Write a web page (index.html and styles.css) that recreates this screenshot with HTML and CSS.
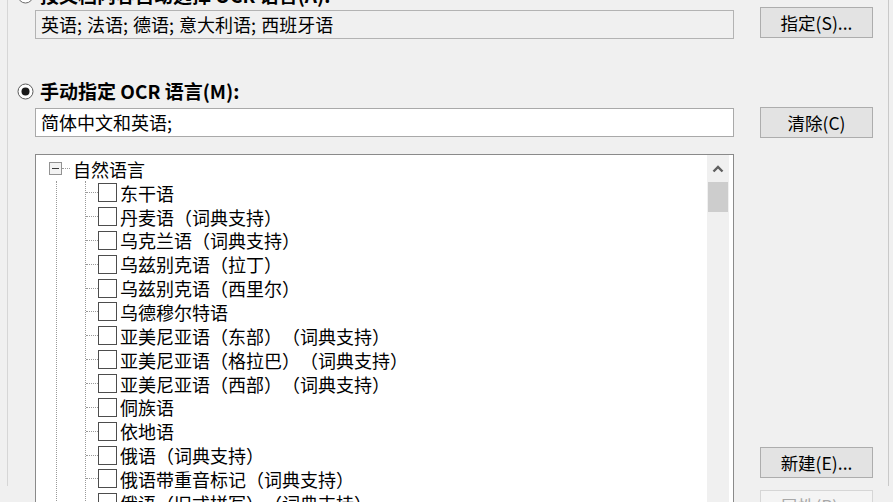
FILE: index.html
```html
<!DOCTYPE html>
<html lang="zh-CN">
<head>
  <meta charset="utf-8" />
  <title>OCR 语言</title>
  <link rel="stylesheet" href="styles.css">
</head>
<body>
  <div class="dialog">
    <div class="group">
      <div class="opt opt-auto">
        <svg class="radio" width="17" height="17" viewBox="0 0 17 17"><circle cx="8.5" cy="8.5" r="7.5" fill="#fff" stroke="#6a6a6a"/></svg>
        <b>按文档内容自动选择 OCR 语言(A):</b>
      </div>
      <div class="row row-auto">
        <div class="field is-disabled">英语; 法语; 德语; 意大利语; 西班牙语</div>
        <button class="btn" type="button">指定(S)...</button>
      </div>

      <div class="opt opt-manual">
        <svg class="radio" width="17" height="17" viewBox="0 0 17 17"><circle cx="8.5" cy="8.5" r="7.5" fill="#fff" stroke="#5a5a5a"/><circle cx="8.5" cy="8.5" r="4" fill="#1a1a1a"/></svg>
        <b>手动指定 OCR 语言(M):</b>
      </div>
      <div class="row row-manual">
        <div class="field">简体中文和英语;</div>
        <button class="btn" type="button">清除(C)</button>
      </div>

      <div class="row row-tree">
        <div class="tree">
          <div class="tree-list">
            <div class="node root"><span class="toggle"></span><span class="dots dots-short"></span>自然语言</div>
            <div class="branch">
              <div class="leaves">
                <div class="node"><span class="dots"></span><span class="check"></span>东干语</div>
                <div class="node"><span class="dots"></span><span class="check"></span>丹麦语（词典支持）</div>
                <div class="node"><span class="dots"></span><span class="check"></span>乌克兰语（词典支持）</div>
                <div class="node"><span class="dots"></span><span class="check"></span>乌兹别克语（拉丁）</div>
                <div class="node"><span class="dots"></span><span class="check"></span>乌兹别克语（西里尔）</div>
                <div class="node"><span class="dots"></span><span class="check"></span>乌德穆尔特语</div>
                <div class="node"><span class="dots"></span><span class="check"></span>亚美尼亚语（东部）（词典支持）</div>
                <div class="node"><span class="dots"></span><span class="check"></span>亚美尼亚语（格拉巴）（词典支持）</div>
                <div class="node"><span class="dots"></span><span class="check"></span>亚美尼亚语（西部）（词典支持）</div>
                <div class="node"><span class="dots"></span><span class="check"></span>侗族语</div>
                <div class="node"><span class="dots"></span><span class="check"></span>依地语</div>
                <div class="node"><span class="dots"></span><span class="check"></span>俄语（词典支持）</div>
                <div class="node"><span class="dots"></span><span class="check"></span>俄语带重音标记（词典支持）</div>
                <div class="node"><span class="dots"></span><span class="check"></span>俄语（旧式拼写）（词典支持）</div>
                <div class="node"><span class="dots"></span><span class="check"></span>克丘亚语（玻利维亚）</div>
              </div>
            </div>
          </div>
          <div class="scrollbar">
            <div class="sb-up">
              <svg width="12" height="9" viewBox="0 0 12 9"><path d="M1.5 7.5 L6 3 L10.5 7.5" fill="none" stroke="#5f5f5f" stroke-width="2.4"/></svg>
            </div>
            <div class="sb-thumb"></div>
          </div>
        </div>
        <div class="side">
          <button class="btn" type="button">新建(E)...</button>
          <button class="btn" type="button" disabled>属性(P)...</button>
        </div>
      </div>
    </div>
  </div>
</body>
</html>
```

FILE: styles.css
```css
body{margin:0;background:#f0f0f0;font-family:"Noto Sans CJK SC","Noto Sans",sans-serif;font-size:17.5px;color:#000;text-spacing-trim:space-all}
.dialog{height:502px;overflow:hidden}
.group{box-sizing:border-box;width:882px;height:100%;margin-left:7px;padding-left:27px;border-left:1px solid #d6d6d6;border-right:1px solid #c9c9c9}

/* radio lines */
.opt{display:flex;align-items:center;gap:6px;height:22px;margin-left:-18px;line-height:22px;white-space:nowrap}
.opt b{font-size:19px;font-weight:700}
.opt-auto{margin-top:-16px}
.opt-manual{margin-top:41px}

/* field + button rows */
.row{display:flex;align-items:flex-start}
.row-auto{margin-top:1px}
.row-manual{margin-top:5px}
.row-tree{margin-top:16px}
.field{box-sizing:border-box;width:699px;height:29px;margin-top:3px;padding:0 5px;border:1px solid #a9a9a9;background:#fff;font-size:18px;line-height:27px;white-space:nowrap;word-spacing:1px}
.row-manual .field{margin-top:1px}
.field.is-disabled{background:#f0f0f0;border-color:#b3b3b3}
.btn{display:block;box-sizing:border-box;width:113px;height:31px;margin-left:26px;padding:0;border:1px solid #adadad;background:#e3e3e3;font:inherit;color:#000;line-height:29px}
.btn:disabled{background:#f4f4f4;border-color:#d6d6d6;color:#a8a8a8}

/* tree */
.tree{display:flex;box-sizing:border-box;width:699px;height:420px;border:1px solid #8a8a8a;background:#fff}
.tree-list{flex:1;padding-top:2px;font-size:18px}
.node{display:flex;align-items:center;height:23.85px;white-space:nowrap}
.root{padding-left:13px}
.toggle{box-sizing:border-box;width:13px;height:13px;border:1px solid #929292;background:linear-gradient(#3a3a3a,#3a3a3a) center/7px 1px no-repeat,#f3f3f3}
.dots{width:12px;border-top:1px dotted #9a9a9a}
.dots-short{width:8px;margin-right:3px}
.branch{margin-left:20px;border-left:1px dotted #9a9a9a}
.leaves{margin-left:28px;border-left:1px dotted #9a9a9a}
.check{box-sizing:border-box;width:19px;height:19px;margin-right:3px;border:1px solid #4d4d4d;background:#fff}

.scrollbar{width:22px;margin-right:4px;background:#f0f0f0}
.sb-up{display:flex;align-items:center;justify-content:center;height:27px}
.sb-thumb{height:30px;margin:0 1px;background:#cdcdcd}

.side{padding-top:293px}
.side .btn+.btn{margin-top:12px}
```
